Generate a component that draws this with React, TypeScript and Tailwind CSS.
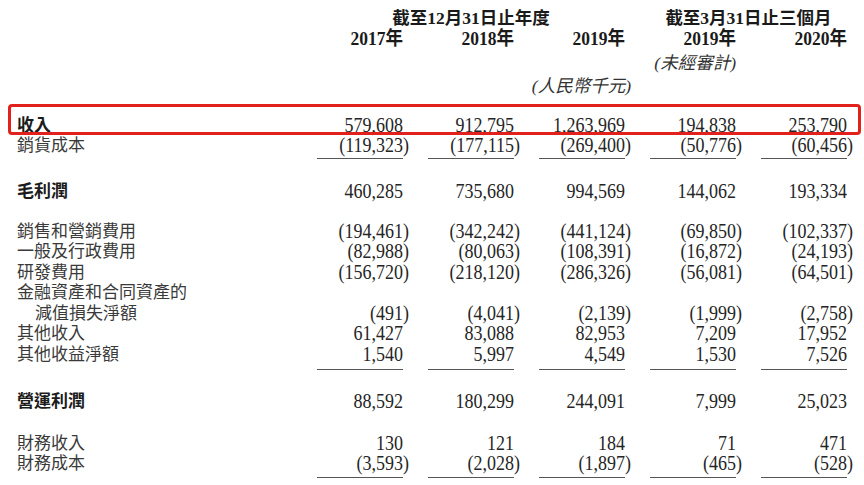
const serif = "font-['Liberation_Serif','Noto_Sans_CJK_TC',serif]";
const cjk = "font-['Noto_Sans_CJK_TC','Liberation_Sans',sans-serif]";

type Row = { label: string; values?: string[]; bold?: boolean; indent?: boolean };

const sections: { top: string; rows: Row[]; rule?: string }[] = [
  {
    top: 'mt-[19.5px]',
    rows: [
      { label: '收入', bold: true, values: ['579,608', '912,795', '1,263,969', '194,838', '253,790'] },
      { label: '銷貨成本', values: ['(119,323)', '(177,115)', '(269,400)', '(50,776)', '(60,456)'] },
    ],
    rule: 'pt-[1.5px]',
  },
  {
    top: 'mt-[22.5px]',
    rows: [{ label: '毛利潤', bold: true, values: ['460,285', '735,680', '994,569', '144,062', '193,334'] }],
  },
  {
    top: 'mt-[19.5px]',
    rows: [
      { label: '銷售和營銷費用', values: ['(194,461)', '(342,242)', '(441,124)', '(69,850)', '(102,337)'] },
      { label: '一般及行政費用', values: ['(82,988)', '(80,063)', '(108,391)', '(16,872)', '(24,193)'] },
      { label: '研發費用', values: ['(156,720)', '(218,120)', '(286,326)', '(56,081)', '(64,501)'] },
      { label: '金融資產和合同資產的' },
      { label: '減值損失淨額', indent: true, values: ['(491)', '(4,041)', '(2,139)', '(1,999)', '(2,758)'] },
      { label: '其他收入', values: ['61,427', '83,088', '82,953', '7,209', '17,952'] },
      { label: '其他收益淨額', values: ['1,540', '5,997', '4,549', '1,530', '7,526'] },
    ],
    rule: 'pt-[4px]',
  },
  {
    top: 'mt-[21.5px]',
    rows: [{ label: '營運利潤', bold: true, values: ['88,592', '180,299', '244,091', '7,999', '25,023'] }],
  },
  {
    top: 'mt-[21.5px]',
    rows: [
      { label: '財務收入', values: ['130', '121', '184', '71', '471'] },
      { label: '財務成本', values: ['(3,593)', '(2,028)', '(1,897)', '(465)', '(528)'] },
    ],
    rule: 'pt-[2.5px]',
  },
];

// the report's numerals are a tall, narrow Times cut
function Num({ v }: { v: string }) {
  if (v.startsWith('(')) {
    return (
      <span className="inline-block origin-[50%_80%] scale-y-[1.2]">
        {v.slice(0, -1)}
        <span className="-mr-[6px]">)</span>
      </span>
    );
  }
  return <span className="inline-block origin-[50%_80%] scale-y-[1.2]">{v}</span>;
}

function Line({ row }: { row: Row }) {
  return (
    <div className="grid h-[20.5px] grid-cols-[275px_repeat(5,111px)] leading-[20.5px]">
      <div
        className={`${cjk} -mt-[2px] text-[17px] whitespace-nowrap ${
          row.bold ? 'font-bold text-[#1c1c1c]' : 'text-[#3a3a3a]'
        } ${row.indent ? 'pl-[18px]' : ''}`}
      >
        {row.label}
      </div>
      {row.values?.map((v, i) => (
        <div key={i} className="text-right text-[18px] text-[#252525]">
          <Num v={v} />
        </div>
      ))}
    </div>
  );
}

export default function App() {
  return (
    <div className={`${serif} relative h-[485px] w-[864px] overflow-hidden bg-white px-[17px] pt-[8px]`}>
      {/* column heads */}
      <div className="grid grid-cols-[275px_repeat(5,111px)] text-[17.5px] leading-[20px] text-[#1a1a1a]">
        <div className="col-span-3 col-start-2 pl-[25px] text-center font-bold whitespace-nowrap">截至12月31日止年度</div>
        <div className="col-span-2 pl-[25px] text-center font-bold whitespace-nowrap">截至3月31日止三個月</div>
        {['2017年', '2018年', '2019年', '2019年', '2020年'].map((y, i) => (
          <div key={i} className={`${i === 0 ? 'col-start-2' : ''} mt-[1px] text-right font-bold`}>
            <span className="inline-block origin-[50%_80%] scale-y-[1.12]">{y}</span>
          </div>
        ))}
        <div className="col-start-5 mt-[4px] text-right italic text-[#333]">(未經審計)</div>
        <div className="col-start-4 mt-[3px] -mr-[6px] text-right italic text-[#333]">(人民幣千元)</div>
      </div>

      <div>
        {sections.map((s, si) => (
          <div key={si} className={s.top}>
            {s.rows.map((r, ri) => (
              <Line key={ri} row={r} />
            ))}
            {s.rule && (
              <div className={`grid grid-cols-[275px_repeat(5,111px)] ${s.rule}`}>
                {[0, 1, 2, 3, 4].map(i => (
                  <div key={i} className={`${i === 0 ? 'col-start-2' : ''} ml-auto h-px w-[86px] bg-[#555]`} />
                ))}
              </div>
            )}
          </div>
        ))}
      </div>

      {/* highlight round the revenue row */}
      <div className="absolute top-[104px] left-[8px] h-[31px] w-[853px] rounded-[4px] border-[3px] border-[#e3211c]" />
    </div>
  );
}
